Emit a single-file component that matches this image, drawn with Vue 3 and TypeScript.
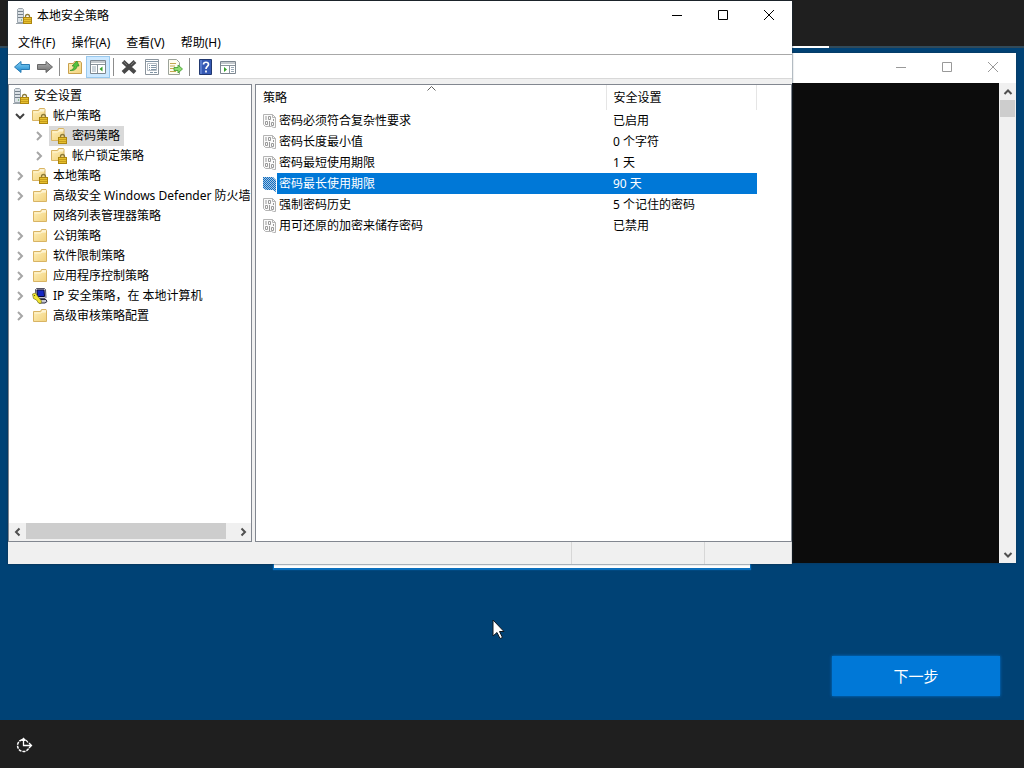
<script setup lang="ts">
import { ref } from 'vue'

type IconKind = 'server' | 'lockfolder' | 'folder' | 'ip'

interface TreeNode {
  label: string
  icon: IconKind
  level: 0 | 1 | 2
  toggle: 'none' | 'open' | 'closed'
}

interface Policy {
  name: string
  value: string
}

const menus: string[] = ['文件(F)', '操作(A)', '查看(V)', '帮助(H)']

const tree: TreeNode[] = [
  { label: '安全设置', icon: 'server', level: 0, toggle: 'none' },
  { label: '帐户策略', icon: 'lockfolder', level: 1, toggle: 'open' },
  { label: '密码策略', icon: 'lockfolder', level: 2, toggle: 'closed' },
  { label: '帐户锁定策略', icon: 'lockfolder', level: 2, toggle: 'closed' },
  { label: '本地策略', icon: 'lockfolder', level: 1, toggle: 'closed' },
  { label: '高级安全 Windows Defender 防火墙', icon: 'folder', level: 1, toggle: 'closed' },
  { label: '网络列表管理器策略', icon: 'folder', level: 1, toggle: 'none' },
  { label: '公钥策略', icon: 'folder', level: 1, toggle: 'closed' },
  { label: '软件限制策略', icon: 'folder', level: 1, toggle: 'closed' },
  { label: '应用程序控制策略', icon: 'folder', level: 1, toggle: 'closed' },
  { label: 'IP 安全策略，在 本地计算机', icon: 'ip', level: 1, toggle: 'closed' },
  { label: '高级审核策略配置', icon: 'folder', level: 1, toggle: 'closed' },
]

const policies: Policy[] = [
  { name: '密码必须符合复杂性要求', value: '已启用' },
  { name: '密码长度最小值', value: '0 个字符' },
  { name: '密码最短使用期限', value: '1 天' },
  { name: '密码最长使用期限', value: '90 天' },
  { name: '强制密码历史', value: '5 个记住的密码' },
  { name: '用可还原的加密来储存密码', value: '已禁用' },
]

const activeNode = ref(2)
const activePolicy = ref(3)
</script>

<template>
  <div class="desktop">
    <svg class="defs" aria-hidden="true">
      <defs>
        <linearGradient id="gFolder" x1="0" y1="0" x2="1" y2="1">
          <stop offset="0" stop-color="#fff0bc" />
          <stop offset="1" stop-color="#f1d27c" />
        </linearGradient>
        <linearGradient id="gBlue" x1="0" y1="0" x2="0" y2="1">
          <stop offset="0" stop-color="#8ad4f6" />
          <stop offset="1" stop-color="#1683cc" />
        </linearGradient>
        <linearGradient id="gGray" x1="0" y1="0" x2="0" y2="1">
          <stop offset="0" stop-color="#b4b4b4" />
          <stop offset="1" stop-color="#6a6a6a" />
        </linearGradient>
        <pattern id="pDots" width="2" height="2" patternUnits="userSpaceOnUse">
          <rect width="2" height="2" fill="#a9c6df" />
          <rect width="1" height="1" fill="#0b6cc4" />
          <rect x="1" y="1" width="1" height="1" fill="#0b6cc4" />
        </pattern>
        <symbol id="lock" viewBox="0 0 16 16">
          <path d="M9.500 10V8.500a2 2 0 0 1 4 0V10" fill="none" stroke="#8b7a3a" stroke-width="1.300" />
          <rect x="7.500" y="9.500" width="8" height="6" fill="#e6c02f" stroke="#ad860f" />
          <path d="M8 11.500h7M8 13.500h7" stroke="#b98e12" stroke-width=".7" />
        </symbol>
        <symbol id="i-folder" viewBox="0 0 16 16">
          <path d="M1.500 3.500h7l1-2h4.500l.5 1v11h-13z" fill="url(#gFolder)" stroke="#d8b464" />
          <path d="M10 3h4" stroke="#fff" />
          <path d="M2.500 5h6l1.500-1h4" fill="none" stroke="#fff7d8" />
        </symbol>
        <symbol id="i-lockfolder" viewBox="0 0 16 16">
          <path d="M.5 2.500h6l1-2h5l.5 1v11H.5z" fill="url(#gFolder)" stroke="#d8b464" />
          <path d="M8 2h4.500" stroke="#fff" />
          <path d="M1.500 4h5l1.500-1h4" fill="none" stroke="#fff7d8" />
          <use href="#lock" />
        </symbol>
        <symbol id="i-server" viewBox="0 0 16 16">
          <path d="M1.500 1.500l1-1h4l1 1v13h-6z" fill="#dbe1e6" stroke="#9ba5ad" />
          <path d="M2 3.500h5M2 6.500h5M2 9.500h5" stroke="#75818b" />
          <path d="M5 12h1" stroke="#3aa03a" />
          <path d="M0 15.500h7" stroke="#9aa3aa" />
          <use href="#lock" />
        </symbol>
        <symbol id="i-ip" viewBox="0 0 16 16">
          <path d="M3.500 1.500l1-1h8l1 1 .5 8-1 1h-7l-2-1z" fill="#c8c8d2" stroke="#505064" />
          <path d="M5 2h7l.5 6.500h-7z" fill="#1426c4" stroke="#080838" />
          <path d="M7 11.500h7l1 2-2 1.500H7z" fill="#c8c8d2" stroke="#26263c" />
          <path d="M.5 6l3-1 2 3 4 5-.5 2.500-2.500-.5-2-3-3-1.500z" fill="#f2e532" stroke="#77741c" stroke-width=".7" />
          <path d="M2 7l1 1" stroke="#55531a" />
        </symbol>
        <symbol id="i-policy" viewBox="0 0 16 16">
          <path d="M1.500 1.500h9l3 3v10h-2l-2-1h-6l-2-2z" fill="#fafafa" stroke="#b4b4b4" />
          <path d="M10.500 1.500v3h3" fill="none" stroke="#b4b4b4" />
          <path d="M4 3v4M11.500 6v2M3.500 8.500h2v3h-2zM6.500 3.500h2v3h-2zM7.500 8v5M9.500 9.500h2v3h-2z" fill="none" stroke="#9a9a9a" />
        </symbol>
        <symbol id="i-policy-active" viewBox="0 0 16 16">
          <path d="M1 1h10l3 3v12l-3-2H4l-3-2z" fill="url(#pDots)" />
        </symbol>
      </defs>
    </svg>

    <div class="setup-top"></div>
    <div class="setup-progress"><i></i></div>
    <main class="setup-body">
      <button class="next" type="button">下一步</button>
    </main>
    <footer class="setup-foot">
      <button type="button" aria-label="轻松使用">
        <svg width="18" height="18" viewBox="0 0 18 18" fill="none" stroke="#fff">
          <path d="M6 3.700a6 6 0 1 0 7 8.300" stroke-width="1.500" stroke-dasharray="3 1" />
          <path d="M9.500 4a6 6 0 0 1 2.500 2.500" stroke-width="1.300" />
          <path d="M7.500 2.500v7h8M13 7l2.500 2.500L13 12M5.500 4.500l2-2 2 2" stroke-width="1.300" />
        </svg>
      </button>
    </footer>
    <div class="field"></div>

    <section class="win console" aria-label="控制台">
      <header class="bar">
        <div class="controls">
          <button type="button" aria-label="最小化"><svg viewBox="0 0 12 12"><path d="M1 5.500h10" /></svg></button>
          <button type="button" aria-label="最大化"><svg viewBox="0 0 12 12"><path d="M1.500.5h9v9h-9z" /></svg></button>
          <button type="button" aria-label="关闭"><svg viewBox="0 0 12 12"><path d="M1 0l10 10M11 0L1 10" /></svg></button>
        </div>
      </header>
      <div class="console-body">
        <div class="screen"></div>
        <div class="vscroll">
          <button type="button" aria-label="向上"><svg viewBox="0 0 10 10"><path d="M1.500 7L5 3.500 8.500 7" /></svg></button>
          <span class="vthumb"></span>
          <button type="button" aria-label="向下"><svg viewBox="0 0 10 10"><path d="M1.500 3L5 6.500 8.500 3" /></svg></button>
        </div>
      </div>
    </section>

    <section class="win policy" aria-label="本地安全策略">
      <header class="bar">
        <svg class="icon"><use href="#i-server" /></svg>
        <h1>本地安全策略</h1>
        <div class="controls">
          <button type="button" aria-label="最小化"><svg viewBox="0 0 12 12"><path d="M1 5.500h10" /></svg></button>
          <button type="button" aria-label="最大化"><svg viewBox="0 0 12 12"><path d="M1.500.5h9v9h-9z" /></svg></button>
          <button type="button" aria-label="关闭"><svg viewBox="0 0 12 12"><path d="M1 0l10 10M11 0L1 10" /></svg></button>
        </div>
      </header>
      <nav class="menu">
        <button v-for="m in menus" :key="m" type="button">{{ m }}</button>
      </nav>
      <div class="tools" role="toolbar">
        <button type="button" aria-label="后退">
          <svg class="icon" viewBox="0 0 16 16"><path d="M.5 8L7 2.500v3h8.500v5H7v3z" fill="url(#gBlue)" stroke="#2a7cb4" /></svg>
        </button>
        <button type="button" aria-label="前进">
          <svg class="icon" viewBox="0 0 16 16"><path d="M15.500 8L9 2.500v3H.5v5H9v3z" fill="url(#gGray)" stroke="#666" /></svg>
        </button>
        <span class="sep"></span>
        <button type="button" aria-label="上移一级">
          <svg class="icon" viewBox="0 0 16 16">
            <path d="M1.500 4.500h5l1-2h6l1 1.500v10.500h-13z" fill="url(#gFolder)" stroke="#c9a04c" />
            <path d="M3 11.500c3-.5 4-2.500 4-4.500H5l5-5 2 5h-2c0 3-3 5-7 4.500z" fill="#54c23c" stroke="#2e8b22" stroke-width=".7" />
          </svg>
        </button>
        <button type="button" class="pressed" aria-label="显示控制台树" aria-pressed="true">
          <svg class="icon" viewBox="0 0 16 16">
            <path d="M.5 1.500h15v13H.5z" fill="#fff" stroke="#7d8790" />
            <path d="M1 3h14M1 5.500h14" stroke="#8a949c" />
            <path d="M7.500 6v8" stroke="#8a949c" />
            <path d="M2 8h4M2 10h4M2 12h4" stroke="#9aaab6" />
            <path d="M12.500 7.500v5l-3-2.500z" fill="#35a02a" />
          </svg>
        </button>
        <span class="sep"></span>
        <button type="button" aria-label="删除">
          <svg class="icon" viewBox="0 0 16 16"><path d="M2 2.500l12 11M14 2.500l-12 11" stroke="#484848" stroke-width="4" /><path d="M2 2l4 4M14 2l-4 4" stroke="#777" stroke-width="1" /></svg>
        </button>
        <button type="button" aria-label="属性">
          <svg class="icon" viewBox="0 0 16 16">
            <path d="M1.500.5h13v15h-13z" fill="#fff" stroke="#8b949c" />
            <path d="M3.500 4.500h9v7h-9z" fill="none" stroke="#b1bac2" />
            <path d="M2 2.500h12M5 6.500h1M7 6.500h5M5 8.500h1M7 8.500h5M5 10.500h1M7 10.500h5M6 13.500h3M10 13.500h3" stroke="#8296a6" />
          </svg>
        </button>
        <button type="button" aria-label="导出列表">
          <svg class="icon" viewBox="0 0 16 16">
            <path d="M1.500.5h8l3 3v12h-11z" fill="#fffdf0" stroke="#9ca39a" />
            <path d="M3 4.500h6M3 7h5M3 9.500h4M3 12.500h6" stroke="#c4a850" />
            <path d="M7 8.500h4V6l4.500 4-4.500 4v-2.500H7z" fill="#8fdc70" stroke="#3b9b28" stroke-width=".8" />
          </svg>
        </button>
        <span class="sep"></span>
        <button type="button" aria-label="帮助">
          <svg class="icon" viewBox="0 0 16 16">
            <path d="M2.500.5h12v15h-12z" fill="#3559b4" stroke="#21386f" />
            <path d="M4 1v14" stroke="#7f9ee4" />
            <path d="M6.500 5.500c0-3 5-3 5 0 0 2-2.500 2-2.500 4.500M9 11.500v2" fill="none" stroke="#fff" stroke-width="1.700" />
          </svg>
        </button>
        <button type="button" aria-label="显示操作窗格">
          <svg class="icon" viewBox="0 0 16 16">
            <path d="M.5 2.500h15v12H.5z" fill="#fff" stroke="#7d8790" />
            <path d="M1 4h14M1 6.500h14M9.500 7v7" stroke="#8a949c" />
            <path d="M11 8.500h3M11 10.500h3M11 12.500h3" stroke="#9aaab6" />
            <path d="M4 8v5l3-2.500z" fill="#35a02a" />
          </svg>
        </button>
      </div>

      <div class="panes">
        <div class="pane tree-pane">
          <ul class="tree" role="tree">
            <li
              v-for="(n, i) in tree"
              :key="n.label"
              role="treeitem"
              :aria-selected="i === activeNode"
              :class="['node', 'level-' + n.level]"
            >
              <button v-if="n.toggle !== 'none'" :class="['toggle', n.toggle]" type="button" :aria-label="'展开 ' + n.label">
                <svg viewBox="0 0 10 10"><path d="M3 1l4 4-4 4" /></svg>
              </button>
              <span v-else-if="n.level > 0" class="toggle"></span>
              <button class="item" :class="{ active: i === activeNode }" type="button" @click="activeNode = i">
                <svg class="icon"><use :href="'#i-' + n.icon" /></svg><span>{{ n.label }}</span>
              </button>
            </li>
          </ul>
          <div class="hscroll">
            <button type="button" aria-label="向左"><svg viewBox="0 0 10 10"><path d="M6.500 1.500L3 5l3.500 3.500" /></svg></button>
            <span class="track"><span class="hthumb"></span></span>
            <button type="button" aria-label="向右"><svg viewBox="0 0 10 10"><path d="M3.500 1.500L7 5 3.500 8.500" /></svg></button>
          </div>
        </div>
        <div class="pane list-pane">
          <table>
            <thead>
              <tr>
                <th class="c-name" scope="col" aria-sort="ascending">
                  策略
                  <svg class="sort" viewBox="0 0 9 5"><path d="M.5 4.500l4-4 4 4" /></svg>
                </th>
                <th class="c-value" scope="col">安全设置</th>
              </tr>
            </thead>
            <tbody>
              <tr v-for="(p, i) in policies" :key="p.name" :class="{ active: i === activePolicy }" @click="activePolicy = i">
                <td>
                  <div class="name">
                    <svg class="icon"><use :href="i === activePolicy ? '#i-policy-active' : '#i-policy'" /></svg>
                    <span>{{ p.name }}</span>
                  </div>
                </td>
                <td class="value">{{ p.value }}</td>
              </tr>
            </tbody>
          </table>
        </div>
      </div>
      <footer class="status"><span></span><span></span><span></span></footer>
    </section>

    <svg class="cursor" width="14" height="22" viewBox="0 0 14 22">
      <path d="M1 1v16l4-3.500 3 6 2.500-1-3-6H12z" fill="#fff" stroke="#101820" />
    </svg>
  </div>
</template>

<style>
body {
  margin: 0;
}
</style>

<style scoped>
* {
  box-sizing: border-box;
}
.desktop {
  position: relative;
  min-height: 100vh;
  display: flex;
  flex-direction: column;
  overflow: hidden;
  background: #004275;
  color: #000;
  font: 12px/20px "Noto Sans", "Noto Sans CJK SC", sans-serif;
}
button {
  margin: 0;
  padding: 0;
  border: 0;
  background: none;
  color: inherit;
  font: inherit;
}
.defs {
  position: absolute;
  width: 0;
  height: 0;
}
.icon {
  display: block;
  width: 16px;
  height: 16px;
  flex: none;
}
.setup-top {
  height: 46px;
  background: #1f1f1f;
}
.setup-progress {
  height: 2px;
  background: #314a5a;
}
.setup-progress i {
  display: block;
  width: 81%;
  height: 100%;
  background: linear-gradient(90deg, #314a5a 50%, #fff 50%);
}
.setup-body {
  flex: 1;
  display: flex;
  align-items: flex-end;
  justify-content: flex-end;
  padding: 24px;
}
.next {
  width: 168px;
  height: 40px;
  background: #0078d7;
  box-shadow: 0 0 3px #0078d7;
  color: #fff;
  font-size: 15px;
}
.setup-foot {
  height: 48px;
  padding: 16px;
  background: #1f1f1f;
}
.setup-foot button,
.setup-foot svg {
  display: block;
}
.field {
  position: absolute;
  left: 274px;
  top: 530px;
  width: 476px;
  height: 38px;
  background: #fff;
  box-shadow: 0 1px 1px 1px #0a6fbd;
}
.win {
  position: absolute;
  display: flex;
  flex-direction: column;
}
.bar {
  flex: none;
  height: 30px;
  display: flex;
  align-items: center;
  background: #fff;
}
.controls {
  display: flex;
  margin-left: auto;
  height: 100%;
}
.controls button {
  width: 46px;
  display: grid;
  place-items: center;
}
.controls svg {
  width: 12px;
  height: 12px;
  fill: none;
  stroke: #000;
}
.console {
  left: 24px;
  right: 8px;
  top: 53px;
  height: 510px;
  box-shadow: 0 0 2px #123552;
}
.console .controls svg {
  stroke: #999;
}
.console-body {
  flex: 1;
  display: flex;
}
.screen {
  flex: 1;
  background: #0c0c0c;
}
.vscroll {
  width: 17px;
  display: flex;
  flex-direction: column;
  background: #f0f0f0;
}
.vscroll button,
.hscroll button {
  width: 17px;
  height: 17px;
  display: grid;
  place-items: center;
  flex: none;
}
.vscroll svg,
.hscroll svg {
  width: 10px;
  height: 10px;
  fill: none;
  stroke: #505050;
  stroke-width: 2;
}
.vthumb {
  height: 17px;
  margin: 0 1px auto;
  background: #cdcdcd;
}
.policy {
  left: 8px;
  top: 1px;
  width: 784px;
  height: 563px;
  background: #f0f0f0;
  box-shadow: 0 0 2px #142c42;
}
.policy .bar {
  padding-left: 8px;
}
h1 {
  margin: 0 0 0 5px;
  font-size: 12px;
  font-weight: 400;
}
.menu {
  flex: none;
  height: 24px;
  display: flex;
  align-items: center;
  gap: 16px;
  padding-left: 10px;
  background: #fff;
  border-bottom: 1px solid #a8a8a8;
}
.tools {
  flex: none;
  height: 24px;
  display: flex;
  align-items: center;
  padding: 1px 0 0 2px;
  background: #fff;
  border-bottom: 1px solid #d8d8d8;
}
.tools button {
  width: 23px;
  height: 22px;
  display: grid;
  place-items: center;
}
.tools .pressed {
  width: 24px;
  background: #cce8ff;
  border: 1px solid #99c9ee;
}
.sep {
  width: 1px;
  height: 18px;
  margin: 0 3px;
  background: #8c8c8c;
}
.panes {
  flex: 1;
  display: flex;
  gap: 3px;
  padding-top: 5px;
  min-height: 0;
}
.pane {
  background: #fff;
  border: 1px solid #828790;
  overflow: hidden;
}
.tree-pane {
  width: 244px;
  display: flex;
  flex-direction: column;
}
.list-pane {
  flex: 1;
}
.tree {
  flex: 1;
  margin: 0;
  padding: 1px 0 0;
  list-style: none;
  overflow: hidden;
}
.node {
  display: flex;
  height: 20px;
  white-space: nowrap;
}
.level-0 {
  padding-left: 2px;
}
.level-2 {
  padding-left: 19px;
}
.toggle {
  flex: none;
  width: 21px;
  padding-left: 1px;
  display: grid;
  place-items: center;
}
.toggle svg {
  width: 10px;
  height: 10px;
  fill: none;
  stroke: #a6a6a6;
  stroke-width: 2;
}
.toggle.open svg {
  stroke: #404040;
  transform: rotate(90deg);
}
.item {
  flex: none;
  display: flex;
  align-items: center;
  gap: 5px;
  padding: 0 4px 0 2px;
}
.item.active {
  background: #d9d9d9;
}
.hscroll {
  flex: none;
  display: flex;
  height: 18px;
  background: #f0f0f0;
}
.track {
  flex: 1;
}
.hthumb {
  display: block;
  width: 96%;
  height: 16px;
  background: #cdcdcd;
}
table {
  border-collapse: collapse;
  table-layout: fixed;
  width: 501px;
}
th,
td {
  padding: 0 0 0 7px;
  text-align: left;
  font-weight: 400;
}
td:first-child {
  padding-left: 6px;
}
th {
  position: relative;
  height: 25px;
  border-right: 1px solid #e5e5e5;
}
.c-name {
  width: 350px;
}
.sort {
  position: absolute;
  left: 49%;
  top: 1px;
  width: 9px;
  height: 5px;
  fill: none;
  stroke: #606060;
}
td {
  height: 21px;
}
.name {
  display: flex;
  align-items: center;
  height: 21px;
}
.name span {
  flex: 1;
  padding-left: 2px;
  line-height: 21px;
}
.active .name span,
.active .value {
  background: #0078d7;
  color: #fff;
}
.name .icon {
  margin-right: -1px;
}
.status {
  flex: none;
  height: 22px;
  display: flex;
}
.status span {
  border-right: 1px solid #d7d7d7;
  width: 87px;
}
.status span:first-child {
  flex: 1;
}
.status span:nth-child(2) {
  width: 133px;
}
.cursor {
  position: absolute;
  left: 492px;
  top: 619px;
}
</style>
